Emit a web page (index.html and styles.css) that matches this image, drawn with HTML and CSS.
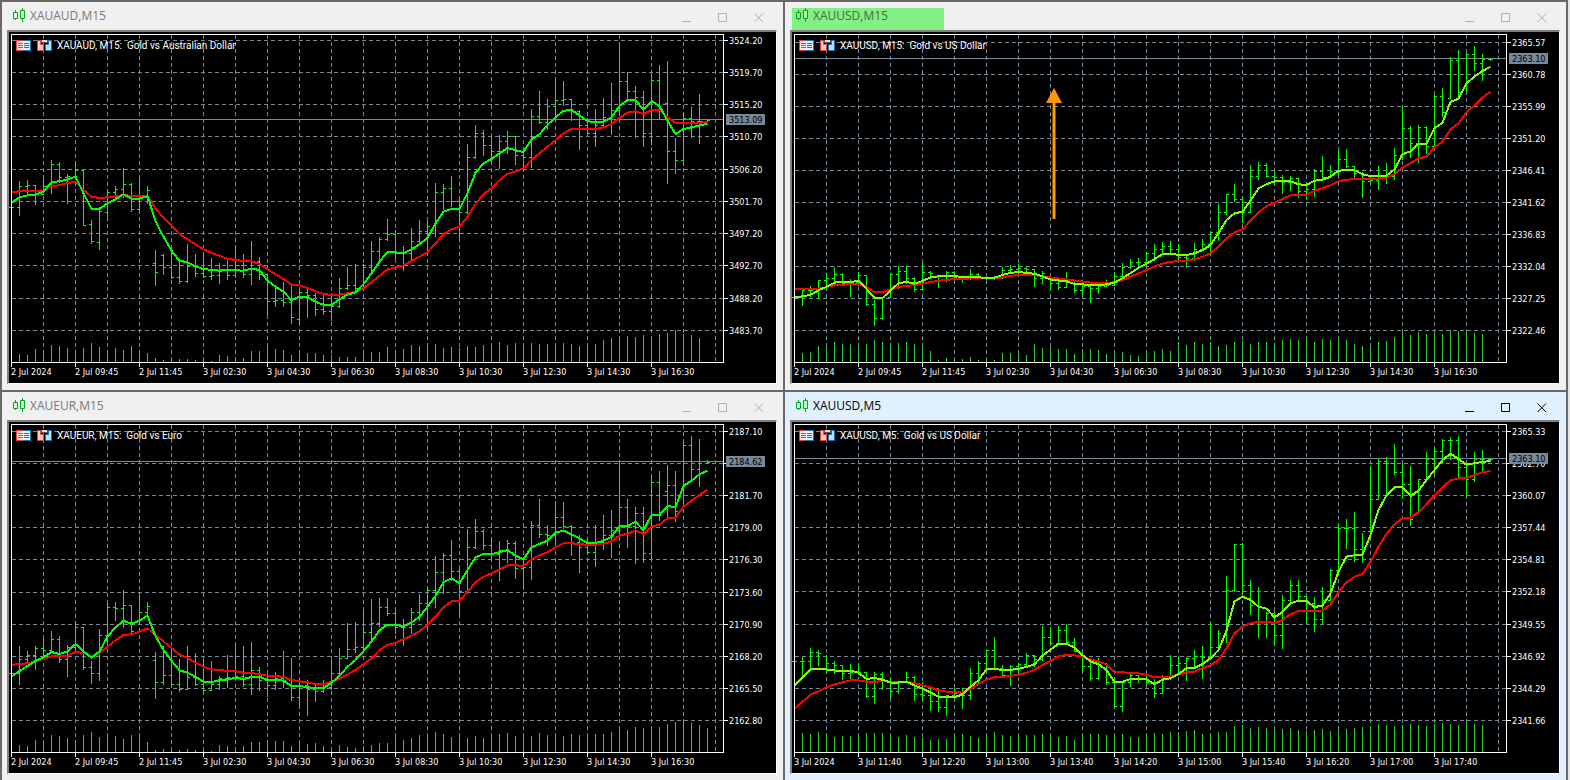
FILE: index.html
```
<!DOCTYPE html>
<html lang="en">
<head>
<meta charset="utf-8">
<title>Gold charts</title>
<link rel="stylesheet" href="styles.css">
</head>
<body>
<svg class="defs" aria-hidden="true">
  <symbol id="candles" viewBox="0 0 13 14">
    <path d="M2.5 2v3M2.5 10v2M9.5 0v3M9.5 11v3M0.5 4.5h4v6h-4zM7.5 2.500h4v8h-4z" fill="none" stroke="#00a818"/>
    <path d="M8 3h3v7h-3z" fill="#c8f5cc"/>
  </symbol>
  <symbol id="min" viewBox="0 0 10 10"><path d="M0 8.500h9" fill="none" stroke="currentColor"/></symbol>
  <symbol id="max" viewBox="0 0 10 10"><path d="M0.5 0.5h8v8h-8z" fill="none" stroke="currentColor"/></symbol>
  <symbol id="close" viewBox="0 0 10 10"><path d="M0.5 0.5l8.500 8.500M9 0.5l-8.500 8.500" fill="none" stroke="currentColor"/></symbol>
</svg>
<main class="desktop">
  <section class="window">
    <header class="titlebar">
      <h2 class="title"><svg class="candles"><use href="#candles"/></svg>XAUAUD,M15</h2>
      <div class="controls">
        <button class="control" aria-label="Minimize"><svg class="glyph"><use href="#min"/></svg></button>
        <button class="control" aria-label="Maximize"><svg class="glyph"><use href="#max"/></svg></button>
        <button class="control" aria-label="Close"><svg class="glyph"><use href="#close"/></svg></button>
      </div>
    </header>
    <div class="frame"><svg class="chart" id="xauaud-m15" viewBox="0 0 767 351"></svg></div>
  </section>
  <section class="window">
    <header class="titlebar">
      <h2 class="title marked"><svg class="candles"><use href="#candles"/></svg>XAUUSD,M15</h2>
      <div class="controls">
        <button class="control" aria-label="Minimize"><svg class="glyph"><use href="#min"/></svg></button>
        <button class="control" aria-label="Maximize"><svg class="glyph"><use href="#max"/></svg></button>
        <button class="control" aria-label="Close"><svg class="glyph"><use href="#close"/></svg></button>
      </div>
    </header>
    <div class="frame"><svg class="chart lime" id="xauusd-m15" viewBox="0 0 767 351"></svg></div>
  </section>
  <section class="window">
    <header class="titlebar">
      <h2 class="title"><svg class="candles"><use href="#candles"/></svg>XAUEUR,M15</h2>
      <div class="controls">
        <button class="control" aria-label="Minimize"><svg class="glyph"><use href="#min"/></svg></button>
        <button class="control" aria-label="Maximize"><svg class="glyph"><use href="#max"/></svg></button>
        <button class="control" aria-label="Close"><svg class="glyph"><use href="#close"/></svg></button>
      </div>
    </header>
    <div class="frame"><svg class="chart" id="xaueur-m15" viewBox="0 0 767 351"></svg></div>
  </section>
  <section class="window active">
    <header class="titlebar">
      <h2 class="title"><svg class="candles"><use href="#candles"/></svg>XAUUSD,M5</h2>
      <div class="controls">
        <button class="control" aria-label="Minimize"><svg class="glyph"><use href="#min"/></svg></button>
        <button class="control" aria-label="Maximize"><svg class="glyph"><use href="#max"/></svg></button>
        <button class="control" aria-label="Close"><svg class="glyph"><use href="#close"/></svg></button>
      </div>
    </header>
    <div class="frame"><svg class="chart lime" id="xauusd-m5" viewBox="0 0 767 351"></svg></div>
  </section>
</main>
<script src="charts.js"></script>
</body>
</html>
```

FILE: styles.css
```
* { box-sizing: border-box; }
body {
  margin: 0;
  background: #696969;
  font-family: "Open Sans", "Noto Sans", sans-serif;
}
.defs { display: none; }
.desktop {
  display: grid;
  grid-template-columns: 1fr 1fr;
  gap: 2px;
  padding: 2px 2px 0;
  border-right: 2px solid #e3e3e3;
}
.window { background: #f0f0f0; color: #787878; padding-bottom: 6px; min-width: 0; }
.window.active { background: #e0f0ff; color: #000; }
.titlebar { display: flex; justify-content: space-between; height: 28px; padding: 0 6px 0 7px; }
.title {
  display: flex;
  align-items: flex-start;
  gap: 4px;
  width: 152px;
  margin: 6px 0 0;
  padding-left: 4px;
  font-size: 12px;
  line-height: 16px;
  font-weight: 400;
}
.title.marked { background: #82f082; color: #4a6a4a; }
.candles { width: 13px; height: 14px; }
.controls { display: flex; }
.control {
  display: flex;
  align-items: center;
  justify-content: center;
  width: 36px;
  padding: 3px 0 0;
  border: 0;
  background: none;
  color: #b0b0b0;
}
.active .control { color: #000; }
.glyph { width: 10px; height: 10px; }
.frame {
  margin: 0 6px 0 5px;
  border: 2px solid #696969;
  border-color: #808080 #fff #fff #808080;
  border-right-width: 1px;
  border-bottom-width: 1px;
  background: #000;
}
.chart { display: block; width: 100%; height: auto; }
.grid { stroke: #778899; stroke-dasharray: 4 3; fill: none; shape-rendering: crispEdges; }
.price-line { stroke: #778899; shape-rendering: crispEdges; }
.volume { stroke: #32cd32; shape-rendering: crispEdges; fill: none; }
.bars { stroke: #00ff00; shape-rendering: crispEdges; fill: none; }
.fast, .slow { fill: none; stroke-width: 2; stroke-linejoin: round; shape-rendering: crispEdges; }
.fast { stroke: #00ff00; }
.lime .fast { stroke: #7fff00; }
.slow { stroke: #ff0000; }
.axis { stroke: #fff; fill: none; shape-rendering: crispEdges; }
.label { fill: #fff; font-family: "DejaVu Sans Condensed", "DejaVu Sans", sans-serif; font-size: 9px; white-space: pre; }
.heading { font-family: Roboto, "Noto Sans", sans-serif; font-size: 10px; }
.price-box { fill: #778899; }
.price-now { fill: #000; }
.arrow { fill: #ff9900; }
```

FILE: charts.js
```
const BOTTOM = 330, RIGHT = 714, STEP = 8;
const barX = k => 2.5 + STEP * k;
const list = text => text.trim().split(/\s+/);

/* A segment covers consecutive bars: y = base + value / unit. Bars are high,low,close[,open]. */
const charts = [
  {
    id: "xauaud-m15", title: "XAUAUD, M15:  Gold vs Australian Dollar",
    rows: [8, 40, 72, 104, 137, 169, 201, 233, 266, 298],
    prices: "3524.20 3519.70 3515.20 3510.70 3506.20 3501.70 3497.20 3492.70 3488.20 3483.70",
    times: "2 Jul 2024,2 Jul 09:45,2 Jul 11:45,3 Jul 02:30,3 Jul 04:30,3 Jul 06:30,3 Jul 08:30,3 Jul 10:30,3 Jul 12:30,3 Jul 14:30,3 Jul 16:30",
    now: "3513.09", nowY: 87,
    segments: [
      { base: 108, unit: 3,
        bars: "200,203,202 124,224,138 120,165,136 135,192,163 118,160,137 60,160,72 67,125,110 102,188,107 64,118,90 92,256,256 240,310,304,253 200,328,214,307 148,240,155,217 138,180,148 84,170,132 130,212,208 115,210,170 138,188,150 330,434,397,370 342,402,382,344 340,415,412 360,428,424 312,425,378 342,408,400 336,412,408 354,418,405 370,428,386 360,416,405 318,412,374 342,410,403 304,432,362 350,418,403 402,524,482 435,498,479 426,497,487 438,548,532 454,553,455,538 446,530,465 460,524,506 465,521,514 460,540,497 414,500,445 382,446,436 372,456,445 372,440,382 304,400,333 292,370,298",
        fast: "188 172 166 164 155 126 124 118 110 160 206 207 190 178 163 176 176 168 243 290 332 362 367 379 388 389 392 390 391 392 386 390 422 440 455 481 470 471 485 494 495 478 464 457 432 400 365",
        slow: "156 154 153 153 153 138 136 129 126 150 170 174 172 169 165 168 168 168 206 232 256 282 298 313 328 338 347 356 360 363 364 371 388 403 417 434 436 444 454 462 465 464 460 456 444 427 408" },
      { base: -2, unit: 3,
        bars: "567,630,612 600,684,670 648,720,670 595,692,634 570,640,604 570,665,588 458,617,486 462,538,475 437,528,514 500,620,547 342,548,382 285,383,310 300,376,346 322,395,364 315,413,334 303,368,319 317,402,374 365,415,380 237,412,257 184,278,277 207,298,228 145,260,210 152,224,207 208,270,242 240,356,286 265,312,309 238,348,286 205,290,262 160,312,240 48,255,152 125,213,182 168,322,200 184,347,308 133,342,151 105,267,266 93,458,364,220 325,430,390 250,405,265 230,322,272 192,338,272 268,274,270",
        fast: "666 667 670 658 643 624 580 545 537 537 490 428 400 387 370 354 361 366 328 313 285 262 242 240 256 274 276 275 262 228 210 210 240 213 228 272 312 297 292 286 282",
        slow: "718 712 706 693 680 667 640 613 598 590 560 522 492 475 450 432 424 415 390 370 350 330 310 297 297 297 297 292 282 264 248 244 252 240 240 262 278 279 279 278 276" }
    ],
    volume: "8 7 13 11 17 16 14 10 14 19 15 11 14 12 16 12 9 4 2 2 3 3 2 2 1 7 6 5 4 11 11 15 13 12 7 11 9 9 7 7 5 5 5 8 10 10 15 12 13 17 16 19 18 14 15 14 16 15 17 18 20 17 19 17 19 18 18 17 19 18 16 17 18 22 24 23 26 25 27 25 28 29 32 28 27 24"
  },
  {
    id: "xauusd-m15", title: "XAUUSD, M15:  Gold vs US Dollar",
    rows: [10, 42, 74, 106, 138, 170, 202, 234, 266, 298],
    prices: "2365.57 2360.78 2355.99 2351.20 2346.41 2341.62 2336.83 2332.04 2327.25 2322.46",
    times: "2 Jul 2024,2 Jul 09:45,2 Jul 11:45,3 Jul 02:30,3 Jul 04:30,3 Jul 06:30,3 Jul 08:30,3 Jul 10:30,3 Jul 12:30,3 Jul 14:30,3 Jul 16:30",
    now: "2363.10", nowY: 26, arrow: true,
    segments: [
      { base: 198, unit: 2.851,
        bars: "190,195,192 170,214,172 160,187,170 143,195,143 124,165,138 105,150,126 122,150,150 140,187,148 120,158,129 130,213,210 200,270,252 190,253,190 124,190,126 104,165,118 104,150,138 135,174,168 93,172,120 118,136,124 130,162,130 118,145,121 118,140,134 130,147,135 110,140,126 124,137,134 132,140,136 132,140,136 105,135,113 99,122,110 98,125,108 106,124,112 115,160,138 116,152,124 130,170,150 140,168,162 120,163,140 145,178,172 150,184,160 155,205,164 155,180,160 142,160,156 120,158,130 95,135,105 82,108,92 80,100,90 62,100,66 40,85,54 35,65,46",
        fast: "193 189 185 172 162 150 148 148 145 168 194 194 172 152 148 153 145 135 132 131 131 135 135 135 136 136 128 122 120 122 125 132 141 144 146 154 155 157 157 155 150 137 123 108 96 83 69",
        slow: "168 168 168 167 163 157 156 154 153 163 177 177 170 162 160 157 153 148 145 142 140 140 138 137 138 138 135 131 128 128 129 132 135 138 141 144 147 150 151 151 149 143 133 124 114 104 96" },
      { base: -2, unit: 3,
        bars: "632,668,658 642,690,680 672,711,683 640,690,656 627,660,642 607,672,606 522,630,547 492,552,493 462,514,508 505,575,545 405,545,438 395,447,404 400,440,437 424,455,442 435,488,455 437,480,445 444,500,483 465,507,476 418,498,424 378,448,440 405,440,424 360,435,388 357,410,409 408,445,430 425,501,454 440,458,451 408,476,436 400,460,437 355,447,374 227,388,295 288,382,340 285,395,292 288,370,348 192,350,199 174,258,245 82,205,91,205 60,195,185 68,180,73 48,120,100 73,150,86 84,90,86",
        fast: "672 674 675 670 661 645 610 570 550 545 512 475 463 454 454 454 463 465 452 449 440 422 420 421 433 438 438 437 418 373 364 342 342 295 278 216 206 160 140 123 110",
        slow: "695 694 692 688 680 670 650 625 607 598 572 547 529 518 507 496 495 494 482 475 466 454 449 447 447 447 446 443 433 412 400 385 380 352 335 298 280 247 226 203 185" }
    ],
    volume: "9 10 16 16 20 18 18 17 18 22 20 19 19 20 18 17 11 2 4 2 3 5 2 3 2 9 9 8 7 18 14 15 13 13 8 13 13 12 8 8 10 7 6 10 11 13 11 20 17 20 18 20 16 17 20 21 18 20 20 19 22 23 22 24 20 23 22 22 22 18 16 17 20 21 25 29 27 30 28 29 28 32 31 31 29 28"
  },
  {
    id: "xaueur-m15", title: "XAUEUR, M15:  Gold vs Euro",
    rows: [9, 41, 73, 105, 137, 170, 202, 234, 266, 298],
    prices: "2187.10 2184.40 2181.70 2179.00 2176.30 2173.60 2170.90 2168.20 2165.50 2162.80",
    times: "2 Jul 2024,2 Jul 09:45,2 Jul 11:45,3 Jul 02:30,3 Jul 04:30,3 Jul 06:30,3 Jul 08:30,3 Jul 10:30,3 Jul 12:30,3 Jul 14:30,3 Jul 16:30",
    now: "2184.62", nowY: 39,
    segments: [
      { base: 148, unit: 3,
        bars: "305,320,310 228,342,268 243,275,256 228,298,235 208,268,240 183,245,208 198,275,268,208 225,317,230 154,240,172 173,297,291 272,340,310 178,330,196 98,225,112 96,150,115 60,170,106 105,190,184 67,162,125 96,142,109 245,383,337,271 228,342,316 236,348,343 267,362,358 228,355,320 250,345,342 266,364,360 272,360,342 318,356,325 255,350,322 228,318,318 228,348,343 216,372,300 290,360,330 312,378,345 305,356,325 243,350,330 263,390,382 326,412,345 330,434,358 340,392,364 330,366,352 270,358,310 234,315,265 158,264,236 156,245,232 122,240,187 88,215,160 84,168,112",
        fast: "320 303 288 273 262 246 252 244 222 244 263 244 200 172 152 162 152 137 198 240 272 301 308 320 335 336 331 329 323 327 321 320 329 329 332 348 348 352 354 354 338 317 290 270 243 215 180",
        slow: "285 282 280 274 267 259 258 257 246 249 259 249 230 211 195 193 185 175 195 214 234 254 263 278 290 298 301 302 304 308 309 313 317 318 321 330 334 337 342 342 336 326 313 300 283 265 240" },
      { base: -2, unit: 3,
        bars: "534,585,580 564,640,622 598,675,620 564,640,577 522,600,550 502,620,510 407,560,457 400,518,406 360,480,453 445,582,514 327,520,380 297,384,333 327,388,374 350,420,402 362,480,390 360,425,368 364,474,444 410,500,440 304,478,314 237,350,342 315,375,346 243,370,290 246,325,318 315,405,365 345,455,382 355,398,397 316,438,365 284,388,345 270,410,330 122,340,260 237,382,318 262,428,278 262,426,398 162,415,187 154,300,285 135,298,194,212 152,302,272 66,258,75 48,180,148 57,197,128 120,130,127",
        fast: "614 615 619 608 590 560 528 487 475 490 450 412 402 402 397 390 407 418 382 372 362 338 332 343 355 370 369 362 350 318 318 305 331 285 285 258 262 198 182 163 152",
        slow: "675 668 658 647 634 614 590 562 544 542 515 487 470 460 449 436 436 438 418 406 397 382 370 370 373 374 374 371 365 346 342 331 342 320 314 295 293 260 242 225 209" }
    ],
    volume: "7 6 12 10 17 16 14 11 17 20 15 16 16 13 17 15 10 2 3 2 2 3 2 2 1 7 6 4 6 10 10 12 11 11 6 10 8 9 6 4 7 5 4 6 7 9 9 15 12 14 17 17 20 18 15 16 14 16 14 17 18 19 16 18 16 19 17 18 16 18 17 15 18 18 20 23 22 25 24 26 25 28 30 32 29 27 24"
  },
  {
    id: "xauusd-m5", title: "XAUUSD, M5:  Gold vs US Dollar",
    rows: [9, 41, 73, 105, 137, 169, 202, 234, 266, 298],
    prices: "2365.33 2362.70 2360.07 2357.44 2354.81 2352.18 2349.55 2346.92 2344.29 2341.66",
    times: "3 Jul 2024,3 Jul 11:40,3 Jul 12:20,3 Jul 13:00,3 Jul 13:40,3 Jul 14:20,3 Jul 15:00,3 Jul 15:40,3 Jul 16:20,3 Jul 17:00,3 Jul 17:40",
    now: "2363.10", nowY: 36,
    segments: [
      { base: -192, unit: 2.851,
        bars: "1210,1240,1228 1216,1268,1228 1192,1255,1204 1197,1240,1207 1213,1262,1235 1230,1262,1240 1240,1280,1262 1237,1278,1260 1236,1265,1260 1262,1330,1328 1260,1348,1265 1260,1310,1287 1275,1332,1315 1285,1320,1290 1260,1290,1275 1272,1340,1322 1290,1340,1325 1300,1368,1342 1315,1370,1360 1325,1382,1325 1305,1335,1320 1305,1362,1325 1248,1338,1262 1228,1290,1235 1197,1245,1198 1160,1250,1250 1240,1275,1270 1240,1297,1243 1235,1262,1238 1206,1245,1212 1212,1242,1222 1128,1225,1160 1132,1180,1178 1130,1180,1140 1124,1176,1176 1162,1200,1200 1205,1258,1244 1230,1282,1276 1220,1280,1238 1235,1295,1290 1275,1360,1358 1285,1370,1290 1265,1300,1270 1268,1290,1278 1265,1295,1290 1280,1330,1320 1270,1320,1275 1212,1280,1240",
        fast: "1300 1276 1252 1252 1253 1256 1256 1256 1262 1280 1277 1282 1290 1290 1288 1298 1308 1318 1331 1332 1332 1324 1302 1284 1252 1252 1254 1254 1251 1246 1238 1214 1196 1180 1180 1190 1212 1230 1238 1255 1288 1288 1280 1280 1281 1295 1282 1278",
        slow: "1365 1345 1325 1315 1304 1295 1290 1284 1284 1288 1288 1286 1288 1288 1288 1292 1298 1304 1312 1316 1317 1316 1308 1294 1282 1275 1274 1271 1268 1262 1254 1240 1229 1216 1211 1213 1216 1224 1230 1239 1260 1261 1263 1264 1268 1275 1275 1273" },
      { base: -2, unit: 3,
        bars: "712,762,728 710,780,714 690,745,708 678,773,710 606,715,682 630,692,640 468,665,511 373,512,373 370,520,496 480,582,555 502,650,560 575,650,578 572,673,646 525,684,541 480,550,494 480,540,528 528,610,548 532,632,598 500,608,540 448,540,451 312,455,324 298,383,323 277,422,388 340,425,332 138,335,238 117,234,124 112,222,129 72,163,155 130,235,193 138,314,296 178,280,178 95,178,118 84,160,93 57,125,61 50,118,61 48,175,140 135,230,178 96,182,116 90,155,116 114,120,117",
        fast: "762 745 744 732 715 690 632 544 530 540 560 566 592 576 550 542 543 561 557 520 455 410 406 404 345 270 226 202 201 228 212 180 150 120 101 117 134 130 126 123",
        slow: "764 757 755 745 736 720 685 640 620 610 606 605 609 600 583 573 572 572 572 553 517 487 470 462 425 380 342 312 295 293 277 252 226 202 181 175 174 165 157 153" }
    ],
    volume: "19 18 20 19 15 16 16 16 19 19 19 17 15 17 15 14 12 13 13 16 18 16 14 17 20 17 16 17 17 17 18 17 15 16 12 18 18 18 17 17 18 15 15 18 19 18 20 20 21 22 18 19 20 20 26 27 24 25 24 22 23 24 22 21 22 23 21 22 23 24 25 26 28 27 26 27 28 27 26 28 29 28 27 29 28 27"
  }
];

function draw(chart) {
  const bars = [], fast = [], slow = [];
  for (const s of chart.segments) {
    const y = v => s.base + v / s.unit;
    list(s.bars).forEach(b => bars.push(b.split(",").map(v => Math.round(y(+v)))));
    list(s.fast).forEach(v => fast.push(y(+v)));
    list(s.slow).forEach(v => slow.push(y(+v)));
  }
  const points = values => values.map((v, k) => `${barX(k)},${v.toFixed(1)}`).join(" ");

  let grid = "";
  for (let x = 34.5; x < RIGHT; x += 32) grid += `M${x} 3V${BOTTOM}`;
  chart.rows.forEach(y => grid += `M3 ${y + 0.5}H${RIGHT}`);

  let shape = "";
  bars.forEach(([high, low, close, open], k) => {
    const x = barX(k);
    const start = open ?? (k ? bars[k - 1][2] : close);
    shape += `M${x} ${high}V${low + 1}M${x} ${close + 0.5}h2.5`;
    if (start >= high - 1 && start <= low + 1) shape += `M${x - 2.5} ${start + 0.5}h2.5`;
  });

  const volume = list(chart.volume).map((h, i) => `M${barX(i + 1)} ${BOTTOM}v-${h}`).join("");

  let axis = `M2.5 2.5H${RIGHT + 0.5}V${BOTTOM + 0.5}H2.5Z`;
  let labels = "";
  list(chart.prices).forEach((price, i) => {
    axis += `M${RIGHT} ${chart.rows[i] + 0.5}h5`;
    if (Math.abs(chart.rows[i] - chart.nowY) > 2)
      labels += `<text class="label" x="720" y="${chart.rows[i] + 4}">${price}</text>`;
  });
  chart.times.split(",").forEach((time, i) => {
    axis += `M${2.5 + 64 * i} ${BOTTOM}v5`;
    labels += `<text class="label" x="${2 + 64 * i}" y="343">${time}</text>`;
  });

  const badges = `
    <path d="M7 8h8v11h-8z" fill="#e8403c"/><path d="M14 8h8v11h-8z" fill="#1873b8"/>
    <path d="M8 9h6v9h-6z" fill="#ffe9e4"/><path d="M14 9h7v9h-7z" fill="#e2f2ff"/>
    <path d="M9 11.500h5M9 13.500h5M9 15.500h5" stroke="#e8403c"/>
    <path d="M15 11.500h5M15 13.500h5M15 15.500h5" stroke="#1873b8"/>
    <path d="M28.500 8.500h3v4h3v6h-6z" fill="#ffd0c8" stroke="#e8403c"/>
    <path d="M42.500 8.500h-3v4h-3v6h6z" fill="#b8e0fa" stroke="#1873b8"/>
    <path d="M32 8h7v3h-7z" fill="#555"/><path d="M33 8h5v2h-5z" fill="#ddd"/>`;
  const arrow = chart.arrow ? `<path class="arrow" d="M262 56l8 15h-6.500v116h-3v-116h-6.500z"/>` : "";

  document.getElementById(chart.id).innerHTML = `
    <path class="grid" d="${grid}"/>
    <path class="volume" d="${volume}"/>
    <path class="price-line" d="M3 ${chart.nowY + 0.5}H${RIGHT}"/>
    <path class="bars" d="${shape}"/>
    <polyline class="slow" points="${points(slow)}"/>
    <polyline class="fast" points="${points(fast)}"/>
    <path class="axis" d="${axis}"/>
    ${labels}
    <rect class="price-box" x="717" y="${chart.nowY - 5}" width="39" height="11"/>
    <text class="label price-now" x="720" y="${chart.nowY + 4}">${chart.now}</text>
    ${badges}
    <text class="label heading" x="48" y="17">${chart.title}</text>
    ${arrow}`;
}
charts.forEach(draw);
```
